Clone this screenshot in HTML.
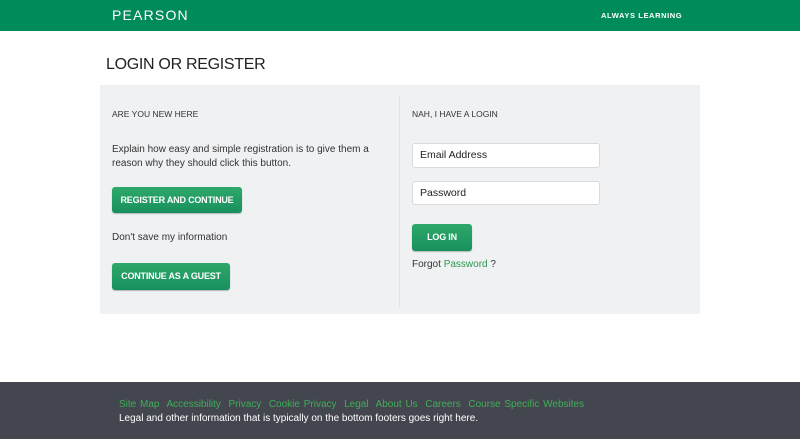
<!DOCTYPE html>
<html><head><style>
body{margin:0;width:800px;height:439px;position:relative;font-family:"Liberation Sans",sans-serif;background:#fff;overflow:hidden}
.a{position:absolute;white-space:nowrap}
.hdr{left:0;top:0;width:800px;height:31px;background:#008b5b}
.btn{position:absolute;background:linear-gradient(#2fa86a,#17905e);border-radius:3px;color:#fff;font-size:9px;font-weight:bold;text-align:center;box-shadow:0 1px 1px rgba(0,0,0,.25);white-space:nowrap;letter-spacing:-.2px}
.inp{position:absolute;left:412px;width:188px;background:#fff;border:1px solid #d8dadd;border-radius:3px;font-size:10.5px;color:#222;box-sizing:border-box;padding-left:7px}
.t{font-size:10px;color:#333}
</style></head><body>
<div class="a hdr"></div>
<div class="a" style="left:112px;top:7px;color:#fff;font-family:'Liberation Sans',sans-serif;font-size:14px;letter-spacing:1.2px">PEARSON</div>
<div class="a" style="left:601px;top:11px;color:#fff;font-size:7.5px;letter-spacing:.6px;font-weight:bold">ALWAYS LEARNING</div>
<div class="a" style="left:106px;top:56px;font-size:16px;color:#222;letter-spacing:-.3px">LOGIN OR REGISTER</div>
<div class="a" style="left:100px;top:85px;width:600px;height:229px;background:#f0f1f3"></div>
<div class="a" style="left:399px;top:95px;width:1px;height:212px;background:#e2e3e6"></div>
<div class="a t" style="left:112px;top:109px;font-size:8.5px">ARE YOU NEW HERE</div>
<div class="a t" style="left:112px;top:143px;width:260px;line-height:14px;white-space:normal">Explain how easy and simple registration is to give them a reason why they should click this button.</div>
<div class="btn" style="left:112px;top:187px;width:130px;height:26px;line-height:26px">REGISTER AND CONTINUE</div>
<div class="a t" style="left:112px;top:232px">Don't save my information</div>
<div class="btn" style="left:112px;top:263px;width:118px;height:27px;line-height:27px">CONTINUE AS A GUEST</div>
<div class="a t" style="left:412px;top:109px;font-size:8.5px">NAH, I HAVE A LOGIN</div>
<div class="inp" style="top:143px;height:25px;line-height:23px">Email Address</div>
<div class="inp" style="top:181px;height:24px;line-height:22px">Password</div>
<div class="btn" style="left:412px;top:224px;width:60px;height:27px;line-height:27px">LOG IN</div>
<div class="a t" style="left:412px;top:259px">Forgot <span style="color:#2a9a4f">Password</span> ?</div>
<div class="a" style="left:0;top:382px;width:800px;height:57px;background:#43464f"></div>
<div class="a" style="left:119px;top:399px;font-size:10px;color:#3fae57;word-spacing:1px">Site Map&nbsp; Accessibility&nbsp; Privacy&nbsp; Cookie Privacy&nbsp; Legal&nbsp; About Us&nbsp; Careers&nbsp; Course Specific Websites</div>
<div class="a" style="left:119px;top:413px;font-size:10px;color:#fff">Legal and other information that is typically on the bottom footers goes right here.</div>
</body></html>
